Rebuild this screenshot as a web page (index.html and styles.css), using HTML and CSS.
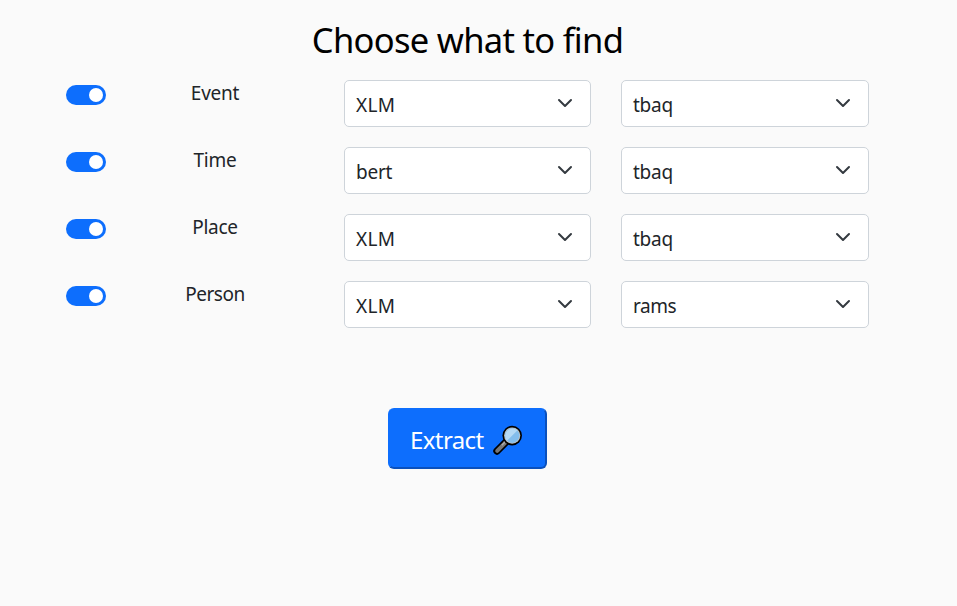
FILE: index.html
```html
<!DOCTYPE html>
<html lang="en">
<head>
<meta charset="utf-8">
<title>Extract</title>
<link rel="stylesheet" href="styles.css">
</head>
<body>
<main class="panel">
  <h1 class="title">Choose what to find</h1>
  <div class="options">
    <div class="row">
      <span class="switch"></span>
      <span class="label">Event</span>
      <div class="select"><span class="upper">XLM</span><svg class="chevron" viewBox="0 0 16 16"><path d="m2 5 6 6 6-6"/></svg></div>
      <div class="select"><span>tbaq</span><svg class="chevron" viewBox="0 0 16 16"><path d="m2 5 6 6 6-6"/></svg></div>
    </div>
    <div class="row">
      <span class="switch"></span>
      <span class="label">Time</span>
      <div class="select"><span>bert</span><svg class="chevron" viewBox="0 0 16 16"><path d="m2 5 6 6 6-6"/></svg></div>
      <div class="select"><span>tbaq</span><svg class="chevron" viewBox="0 0 16 16"><path d="m2 5 6 6 6-6"/></svg></div>
    </div>
    <div class="row">
      <span class="switch"></span>
      <span class="label">Place</span>
      <div class="select"><span class="upper">XLM</span><svg class="chevron" viewBox="0 0 16 16"><path d="m2 5 6 6 6-6"/></svg></div>
      <div class="select"><span>tbaq</span><svg class="chevron" viewBox="0 0 16 16"><path d="m2 5 6 6 6-6"/></svg></div>
    </div>
    <div class="row">
      <span class="switch"></span>
      <span class="label wide">Person</span>
      <div class="select"><span class="upper">XLM</span><svg class="chevron" viewBox="0 0 16 16"><path d="m2 5 6 6 6-6"/></svg></div>
      <div class="select"><span class="wide">rams</span><svg class="chevron" viewBox="0 0 16 16"><path d="m2 5 6 6 6-6"/></svg></div>
    </div>
  </div>
  <button class="extract" type="button">
    <span class="extract-text">Extract</span>
    <svg class="glass" viewBox="0 0 30 30">
      <path d="M4 26 13 17" stroke="#000" stroke-width="7.4" stroke-linecap="round"/>
      <path d="M14 16 19 11" stroke="#000" stroke-width="3.6"/>
      <path d="M4.2 25.8 12.4 17.6" stroke="#777" stroke-width="4" stroke-linecap="round"/>
      <path d="M8.8 20.2 12.8 16.2" stroke="#aaa" stroke-width="1.5"/>
      <circle cx="19.2" cy="10.6" r="9.8" fill="#000"/>
      <circle cx="19.2" cy="10.6" r="8.1" fill="#c4c4c0"/>
      <circle cx="19.2" cy="10.6" r="7.3" fill="#83bdec"/>
      <path d="M14 15.7A7.3 7.3 0 0 1 24.3 5.4Z" fill="#b4d9f5"/>
    </svg>
  </button>
</main>
</body>
</html>
```
FILE: styles.css
```css
* { box-sizing: border-box; }

body {
  margin: 0;
  min-height: 606px;
  background: #fafafa;
  color: #212529;
  font-family: "Noto Sans", "Open Sans", sans-serif;
}

.panel {
  display: flex;
  flex-direction: column;
  align-items: center;
  width: 935px;
  padding-top: 16px;
}

.title {
  margin: 0;
  color: #000;
  font-size: 34.5px;
  font-weight: 400;
  letter-spacing: -0.7px;
  line-height: 48px;
  white-space: nowrap;
}

.options {
  display: grid;
  gap: 20px;
  align-self: flex-start;
  margin: 16px 0 0 66px;
}

.row {
  display: grid;
  grid-template-columns: 40px 178px 247px 248px;
  column-gap: 30px;
  height: 47px;
}

.switch {
  display: flex;
  justify-content: flex-end;
  width: 40px;
  height: 20px;
  margin-top: 5px;
  padding: 3px;
  border-radius: 10px;
  background: #0d6efd;
}

.switch::after {
  content: "";
  width: 14px;
  height: 14px;
  border-radius: 50%;
  background: #fff;
}

.label {
  padding-right: 20px;
  text-align: center;
  font-size: 19px;
  letter-spacing: -0.25px;
  line-height: 27px;
}

.select {
  display: flex;
  align-items: center;
  justify-content: space-between;
  padding: 3px 17px 0 11px;
  border: 1px solid #ced4da;
  border-radius: 5px;
  background: #fff;
  font-size: 19px;
  letter-spacing: -0.25px;
  line-height: 28px;
}

.upper { letter-spacing: 0.3px; }

.wide { letter-spacing: -0.5px; }

.chevron {
  width: 16px;
  height: 16px;
  margin-top: -4px;
  fill: none;
  stroke: #343a40;
  stroke-width: 2;
  stroke-linecap: round;
  stroke-linejoin: round;
}

.extract {
  display: flex;
  align-items: center;
  width: 159px;
  height: 61px;
  margin-top: 80px;
  padding: 3px 0 0 20px;
  border: 2px solid;
  border-color: #0d6efd #0a50bc #0a50bc #0d6efd;
  border-radius: 6px;
  background: #0d6efd;
  color: #fff;
  font: 400 24px/36px "Noto Sans", "Open Sans", sans-serif;
}

.extract-text { letter-spacing: -0.6px; }

.glass {
  width: 30px;
  height: 30px;
  margin: -1px 0 0 9px;
  fill: none;
}
```
